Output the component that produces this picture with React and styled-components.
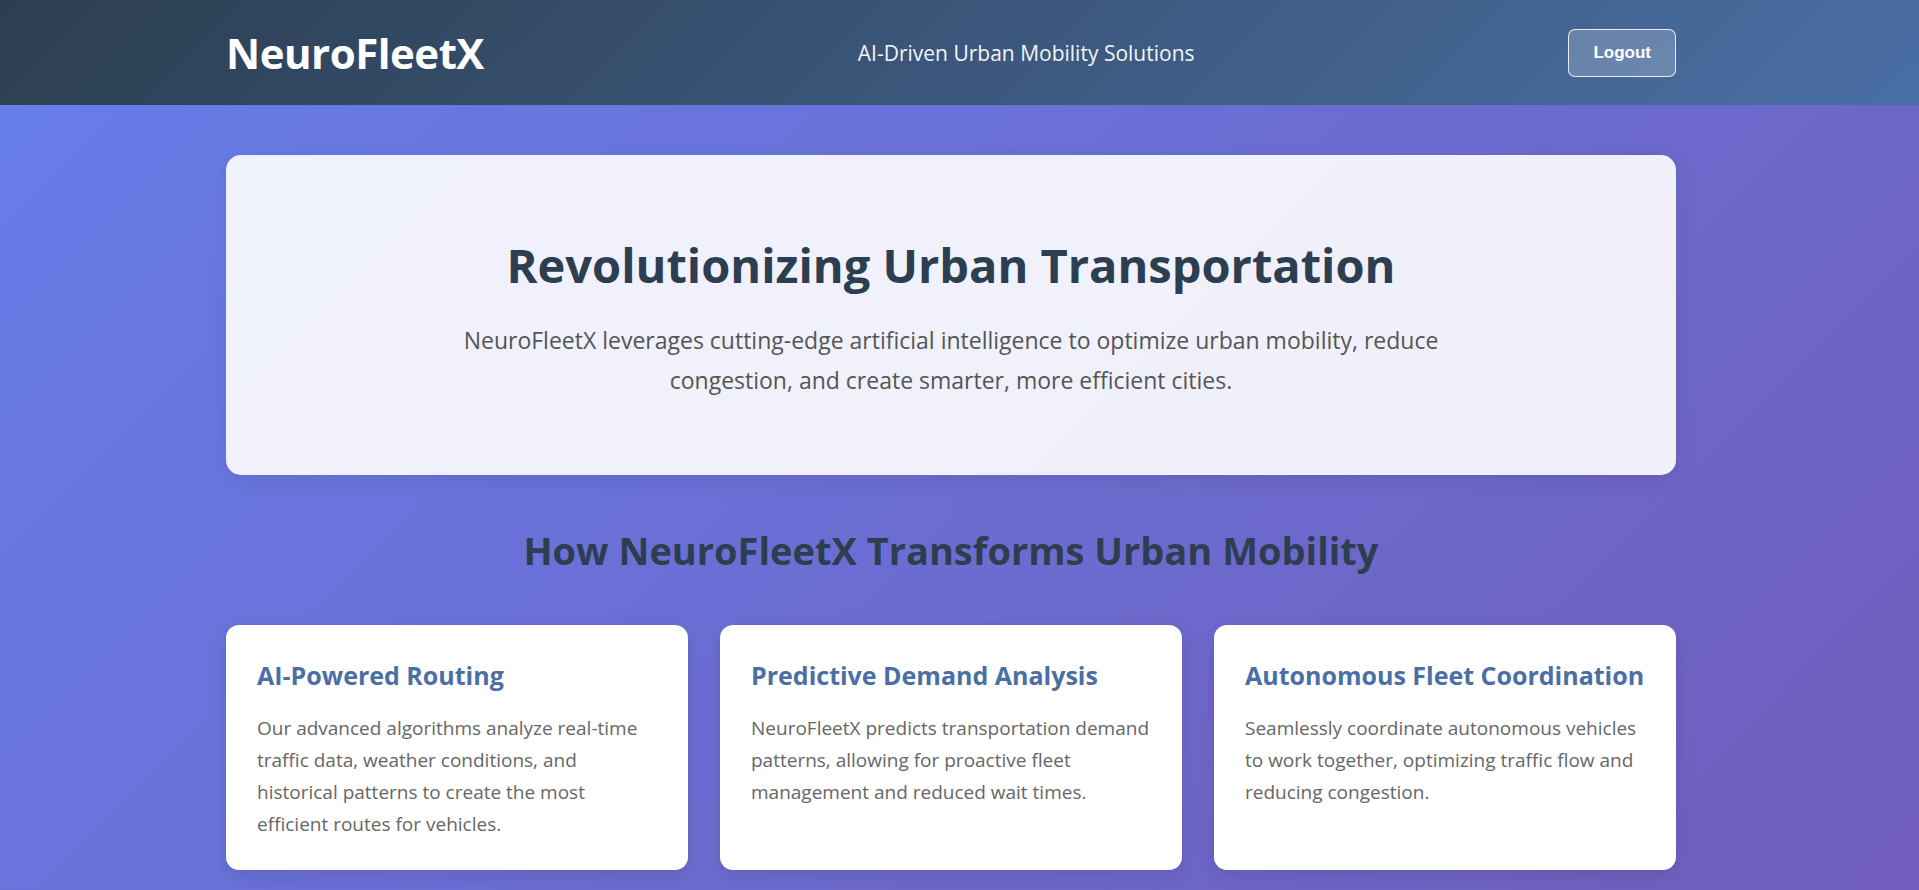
import React from 'react';
import styled, { createGlobalStyle } from 'styled-components';

const GlobalStyle = createGlobalStyle`
  * {
    box-sizing: border-box;
  }
  body {
    margin: 0;
    font-family: "Open Sans", "Noto Sans", sans-serif;
  }
`

// the reference keeps a 17px scrollbar gutter on the right
const Page = styled.div`
  min-height: 2400px;
  background: linear-gradient(135deg, #667eea 0%, #764ba2 100%);
`

const Header = styled.header`
  height: 105px;
  padding-right: 17px;
  background: linear-gradient(135deg, #2c3e50 0%, #4a6fa5 100%);
  color: #fff;
  display: flex;
  align-items: center;
`

const Container = styled.div`
  width: 100%;
  max-width: 1500px;
  margin: 0 auto;
  padding: 0 25px;
`

const HeaderRow = styled(Container)`
  display: flex;
  justify-content: space-between;
  align-items: center;
`

const Logo = styled.h1`
  margin: 0;
  font-size: 42px;
  font-weight: 700;
  letter-spacing: -0.5px;
`

const Tagline = styled.p`
  margin: 0;
  font-size: 21px;
  color: #f1f4fa;
`

const LogoutButton = styled.button`
  font-family: "Liberation Sans", Arial, sans-serif;
  font-size: 17px;
  font-weight: 700;
  color: #fff;
  background: rgba(255, 255, 255, 0.2);
  border: 1px solid rgba(255, 255, 255, 0.85);
  border-radius: 7px;
  padding: 13px 24px;
  cursor: pointer;
`

const Content = styled.div`
  padding-right: 17px;
`

const Main = styled(Container)`
  padding-top: 50px;
`

const Hero = styled.section`
  background: rgba(255, 255, 255, 0.9);
  border-radius: 15px;
  padding: 82px 40px 75px;
  text-align: center;
  box-shadow: 0 6px 20px rgba(0, 0, 0, 0.08);
`

const HeroTitle = styled.h2`
  margin: 0 0 27px;
  font-size: 47px;
  font-weight: 700;
  line-height: 1.2;
  color: #2c3e50;
`

const HeroText = styled.p`
  margin: 0 auto;
  max-width: 1000px;
  font-size: 23px;
  line-height: 40px;
  color: #555;
`

const SectionTitle = styled.h2`
  margin: 52px 0 50px;
  text-align: center;
  font-size: 38px;
  font-weight: 700;
  line-height: 1.25;
  color: #2c3e50;
`

const Features = styled.div`
  display: grid;
  grid-template-columns: repeat(3, 1fr);
  gap: 32px;
`

const Card = styled.div`
  background: #fff;
  border-radius: 13px;
  padding: 34px 31px 30px;
  box-shadow: 0 6px 18px rgba(0, 0, 0, 0.1);
`

const CardTitle = styled.h3`
  margin: 0 0 21px;
  font-size: 25px;
  font-weight: 700;
  line-height: 1.3;
  color: #4a6fa5;
`

const CardText = styled.p`
  margin: 0;
  font-size: 19px;
  line-height: 32px;
  color: #666;
`

const features = [
  {
    title: 'AI-Powered Routing',
    text: 'Our advanced algorithms analyze real-time traffic data, weather conditions, and historical patterns to create the most efficient routes for vehicles.'
  },
  {
    title: 'Predictive Demand Analysis',
    text: 'NeuroFleetX predicts transportation demand patterns, allowing for proactive fleet management and reduced wait times.'
  },
  {
    title: 'Autonomous Fleet Coordination',
    text: 'Seamlessly coordinate autonomous vehicles to work together, optimizing traffic flow and reducing congestion.'
  }
]

export default function App() {
  return (
    <Page>
      <GlobalStyle />
      <Header>
        <HeaderRow>
          <Logo>NeuroFleetX</Logo>
          <Tagline>AI-Driven Urban Mobility Solutions</Tagline>
          <LogoutButton>Logout</LogoutButton>
        </HeaderRow>
      </Header>
      <Content>
        <Main>
          <Hero>
            <HeroTitle>Revolutionizing Urban Transportation</HeroTitle>
            <HeroText>
              NeuroFleetX leverages cutting-edge artificial intelligence to optimize urban mobility, reduce congestion, and create smarter, more efficient cities.
            </HeroText>
          </Hero>
          <SectionTitle>How NeuroFleetX Transforms Urban Mobility</SectionTitle>
          <Features>
            {features.map(f => (
              <Card key={f.title}>
                <CardTitle>{f.title}</CardTitle>
                <CardText>{f.text}</CardText>
              </Card>
            ))}
          </Features>
        </Main>
      </Content>
    </Page>
  )
}
